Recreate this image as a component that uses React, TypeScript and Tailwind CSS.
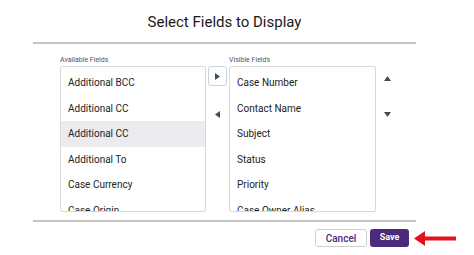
import React from 'react';

const available = ['Additional BCC', 'Additional CC', 'Additional CC', 'Additional To', 'Case Currency', 'Case Origin'];
const visible = ['Case Number', 'Contact Name', 'Subject', 'Status', 'Priority', 'Case Owner Alias'];

const FieldList: React.FC<{ items: string[]; selected?: number }> = ({ items, selected }) => (
  <div className="h-[146px] overflow-hidden rounded-[2px] border border-[#d9d9d9] bg-white pt-[3px]">
    {items.map((item, i) => (
      <div
        key={i}
        className={`flex h-[25.5px] items-center pl-[7px] text-[10px] text-[#222] ${i === selected ? 'bg-[#ecebf0]' : ''}`}
      >
        {item}
      </div>
    ))}
  </div>
);

const Tri: React.FC<{ dir: 'left' | 'right' | 'up' | 'down' }> = ({ dir }) => {
  const pts = {
    right: '0,0 5,3.5 0,7',
    left: '5,0 0,3.5 5,7',
    up: '0,5 3.5,0 7,5',
    down: '0,0 7,0 3.5,5',
  }[dir];
  const size = dir === 'up' || dir === 'down' ? { w: 7, h: 5 } : { w: 5, h: 7 };
  return (
    <svg width={size.w} height={size.h} viewBox={`0 0 ${size.w} ${size.h}`}>
      <polygon points={pts} fill="#4a4a4a" />
    </svg>
  );
};

const App: React.FC = () => {
  return (
    <div className="h-[255px] w-[474px] overflow-hidden bg-white font-['Roboto',sans-serif]">
      <div className="ml-[33px] w-[383px]">
        <div className="flex h-[44px] items-center justify-center border-b-2 border-[#c6c6c6] pt-[3px] text-[15px] text-[#1a1a1a]">
          Select Fields to Display
        </div>

        <div className="flex pl-[27px] pt-[12px]">
          <div className="w-[146px]">
            <div className="mb-[1px] h-[9px] text-[7px] leading-[9px] text-[#555]">Available Fields</div>
            <FieldList items={available} selected={2} />
          </div>

          <div className="flex w-[23px] flex-col items-center pt-[10px]">
            <button className="flex h-[20px] w-[19px] items-center justify-center rounded-[3px] border border-[#c9d4e2] bg-white">
              <Tri dir="right" />
            </button>
            <div className="mt-[23px] flex h-[10px] items-center">
              <Tri dir="left" />
            </div>
          </div>

          <div className="w-[147px]">
            <div className="mb-[1px] h-[9px] text-[7px] leading-[9px] text-[#555]">Visible Fields</div>
            <FieldList items={visible} />
          </div>

          <div className="flex w-[22px] flex-col items-center pl-[1px] pt-[20px]">
            <Tri dir="up" />
            <div className="mt-[31px]">
              <Tri dir="down" />
            </div>
          </div>
        </div>

        <div className="mt-[8px] border-b-2 border-[#c6c6c6]" />
      </div>

      <div className="flex items-center pl-[315px] pt-[7px]">
        <button className="flex h-[18px] w-[52px] items-center justify-center rounded-[3px] border border-[#cfcfcf] bg-white text-[10px] font-medium text-[#4b2c7c]">
          Cancel
        </button>
        <button className="ml-[3px] flex h-[18px] w-[39px] items-center justify-center rounded-[3px] bg-[#4b2a7c] text-[9px] font-bold text-white">
          Save
        </button>
        <svg className="ml-[5px]" width="42" height="15" viewBox="0 0 42 15">
          <polygon points="0,7.5 11,0 11,5.5 42,5.5 42,9.5 11,9.5 11,15" fill="#e4121b" />
        </svg>
      </div>
    </div>
  );
};

export default App;
